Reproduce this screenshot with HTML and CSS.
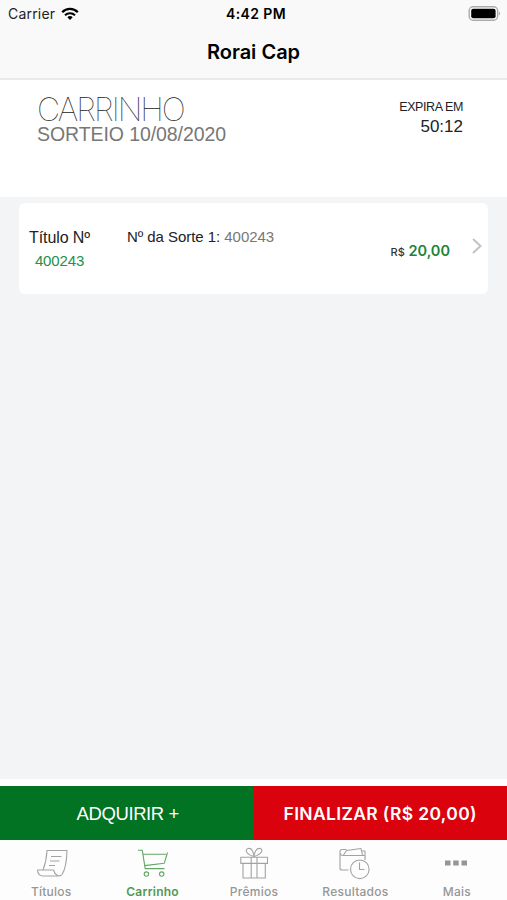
FILE: index.html
```html
<!DOCTYPE html>
<html lang="pt-BR">
<head>
  <meta charset="UTF-8">
  <title>Rorai Cap</title>
  <meta name="viewport" content="width=device-width, initial-scale=1">
  <link rel="stylesheet" href="styles.css">
</head>
<body>

  <header>
    <div class="status-bar">
      <div class="carrier">
        <span class="carrier-name">Carrier</span>
        <svg class="wifi" width="18" height="14" viewBox="0 0 18 14">
          <path d="M1.2 5.2 A11 11 0 0 1 16.8 5.2" fill="none" stroke="#000" stroke-width="2.3"/>
          <path d="M4 8.3 A7 7 0 0 1 14 8.3" fill="none" stroke="#000" stroke-width="2.1"/>
          <path d="M9 13 L6.3 10.3 A3.9 3.9 0 0 1 11.7 10.3 Z"/>
        </svg>
      </div>
      <span class="time">4:42 PM</span>
      <svg class="battery" width="33" height="16" viewBox="0 0 33 16">
        <rect x="1.2" y="0.8" width="28.4" height="13.4" rx="4" fill="#fff" stroke="#aaa" stroke-width="1.4"/>
        <rect x="3.2" y="2.8" width="24.4" height="9.4" rx="2"/>
        <path d="M30.9 5.3 Q32.8 7.5 30.9 9.7 Z" fill="#999"/>
      </svg>
    </div>
    <h1>Rorai Cap</h1>
  </header>

  <section class="summary">
    <div>
      <h2>CARRINHO</h2>
      <p class="draw">SORTEIO 10/08/2020</p>
    </div>
    <div class="expires">
      <p class="expires-label">EXPIRA EM</p>
      <p class="expires-time">50:12</p>
    </div>
  </section>

  <main>
    <div class="card">
      <div class="ticket">
        <p class="ticket-label">Título Nº</p>
        <p class="ticket-number">400243</p>
      </div>
      <p class="lucky"><span class="lucky-label">Nº da Sorte 1:</span> <span class="lucky-number">400243</span></p>
      <p class="price"><small>R$</small> <span>20,00</span></p>
      <svg class="chevron" width="12" height="18" viewBox="0 0 12 18">
        <path d="M2 2 L9.5 9 L2 16" fill="none" stroke="#c3c3c5" stroke-width="2"/>
      </svg>
    </div>
  </main>

  <div class="actions">
    <button class="buy"><span>ADQUIRIR +</span></button>
    <button class="finish"><span>FINALIZAR (R$ 20,00)</span></button>
  </div>

  <nav>
    <a class="tab">
      <svg class="icon" viewBox="0 0 36 36">
        <path d="M10 24 Q13.5 15 14 4.5 H34 Q33.5 22 29 28.5 Q27.5 30.5 24.5 29.5 Q21.5 28 20.5 24 H4.5 Q5 30 10 30 H26"/>
        <path d="M18 10.5 H28.5 M17 15 H26.5 M16 19.5 H22"/>
      </svg>
      <span>Títulos</span>
    </a>
    <a class="tab active">
      <svg class="icon" viewBox="0 0 36 36">
        <path d="M4 4.3 H8.3 L11.2 22.6 H30.5"/>
        <path d="M9 8.3 H32 M33.5 6.5 L30.3 17.2 L10.7 19.6"/>
        <circle cx="12.4" cy="28.1" r="2.2"/>
        <circle cx="27.7" cy="28.1" r="2.2"/>
      </svg>
      <span>Carrinho</span>
    </a>
    <a class="tab">
      <svg class="icon" viewBox="0 0 36 36">
        <path d="M4.8 11.2 H31.5 V17.4 H4.8 Z M7 17.4 V32 H29.3 V17.4 M15.2 11.2 V32 M21 11.2 V32"/>
        <path d="M18 10.5 C10 8 8.5 3.5 12 2.5 C16 1.5 17.5 6 18 10.5 C18.5 6 20.5 1.5 24.3 2.5 C27.5 3.5 26 8 18 10.5"/>
      </svg>
      <span>Prêmios</span>
    </a>
    <a class="tab">
      <svg class="icon" viewBox="0 0 36 36">
        <path d="M11.5 24 H5 Q3 24 3 22 V5.5 Q3 3.5 5 3.5 H9.5 M3 6 Q3 9.5 6 9.5 H28 V14 M28 9.5 V5 H25"/>
        <path d="M6.5 9 L9.5 4.5 L24 2.5 L25.5 9"/>
        <circle cx="22.8" cy="23.3" r="9.3"/>
        <path d="M22.5 16.5 V23.5 H27.5"/>
      </svg>
      <span>Resultados</span>
    </a>
    <a class="tab">
      <svg class="icon more" viewBox="0 0 36 36">
        <path d="M7 14.5 h5.5 v5 h-5.5z M15.2 14.5 h5.5 v5 h-5.5z M23.5 14.5 h5.5 v5 h-5.5z"/>
      </svg>
      <span>Mais</span>
    </a>
  </nav>

</body>
</html>
```
FILE: styles.css
```css
* {
  box-sizing: border-box;
}

body {
  font-family: "Liberation Sans", Arial, sans-serif;
  background: #fff;
  margin: 0;
  height: 900px;
  display: flex;
  flex-direction: column;
  overflow: hidden;
}

h1, h2, p {
  margin: 0;
  white-space: nowrap;
}

header {
  height: 80px;
  background: #f9f9f9;
  border-bottom: 2px solid #e9e9e9;
  font-family: Inter, sans-serif;
}

.status-bar {
  height: 27px;
  padding: 0 6px 0 8px;
  display: grid;
  grid-template-columns: 1fr auto 1fr;
  align-items: center;
  font-size: 14px;
}

.carrier {
  display: flex;
  align-items: center;
  gap: 6px;
}

.carrier-name {
  color: #222;
  letter-spacing: 0.2px;
}

.time {
  padding-left: 3px;
  font-weight: 600;
  letter-spacing: 0.4px;
}

.battery {
  justify-self: end;
}

h1 {
  font-size: 20px;
  font-weight: 600;
  line-height: 51px;
  letter-spacing: 0;
  text-align: center;
}

.summary {
  height: 117px;
  padding: 12px 44px 0 37px;
  display: flex;
  justify-content: space-between;
}

h2 {
  font-family: Inter, sans-serif;
  font-size: 32px;
  font-weight: 100;
  line-height: 35px;
  letter-spacing: -2px;
  color: #222;
}

.draw {
  font-size: 19.5px;
  line-height: 15px;
  letter-spacing: -0.08px;
  color: #777;
}

.expires {
  text-align: right;
  padding-top: 7px;
  color: #222;
}

.expires-label {
  font-size: 12.5px;
  line-height: 16px;
  letter-spacing: -0.4px;
}

.expires-time {
  font-size: 17px;
  line-height: 23px;
}

main {
  height: 582px;
  padding: 6px 19px;
  background: #f2f4f6;
}

.card {
  height: 91px;
  padding: 0 5px 0 9px;
  display: flex;
  background: #fff;
  border-radius: 6px;
  color: #222;
}

.ticket {
  width: 63px;
  padding-top: 25px;
  text-align: center;
}

.ticket-label {
  font-size: 16px;
  line-height: 20px;
  letter-spacing: -0.1px;
}

.ticket-number {
  font-size: 15px;
  line-height: 25px;
  letter-spacing: -0.15px;
  color: #22914a;
}

.lucky {
  margin-left: 36px;
  padding-top: 24px;
  font-size: 15px;
  line-height: 19px;
  letter-spacing: -0.05px;
}

.lucky-number {
  color: #777;
}

.price {
  margin-left: auto;
  padding-top: 38px;
  font-family: Inter, sans-serif;
  font-size: 14.5px;
  font-weight: 600;
  line-height: 20px;
  color: #1b8439;
}

.price small {
  font-size: 11px;
  font-weight: 500;
  color: #333;
}

.chevron {
  margin: 34px 0 0 21px;
}

.actions {
  height: 61px;
  padding-top: 7px;
  display: flex;
}

.actions button {
  border: 0;
  padding: 0;
  flex: 1;
  color: #fff;
}

.buy {
  background: #027223;
  font-family: "Liberation Sans", Arial, sans-serif;
  font-size: 18.5px;
  letter-spacing: -0.4px;
}

.buy span {
  display: block;
  padding: 2px 0 0 2px;
}

.finish {
  background: #da020d;
  font-family: Inter, sans-serif;
  font-size: 17.5px;
  font-weight: 600;
  letter-spacing: 0.35px;
}

nav {
  height: 60px;
  padding-top: 6px;
  display: flex;
  background: #fdfdfd;
}

.tab {
  flex: 1;
  display: flex;
  flex-direction: column;
  align-items: center;
  font-family: Inter, sans-serif;
  font-size: 12px;
  font-weight: 500;
  line-height: 20px;
  letter-spacing: 0.25px;
  color: #969696;
}

.tab span {
  padding-left: 1px;
}

.icon {
  width: 36px;
  height: 36px;
  flex: none;
  fill: none;
  stroke: #a3a3a3;
  stroke-width: 1.1;
  stroke-linejoin: round;
}

.more {
  fill: #969696;
  stroke: none;
}

.active {
  color: #519a53;
  font-weight: 600;
}

.active .icon {
  stroke: #64a665;
}
```
